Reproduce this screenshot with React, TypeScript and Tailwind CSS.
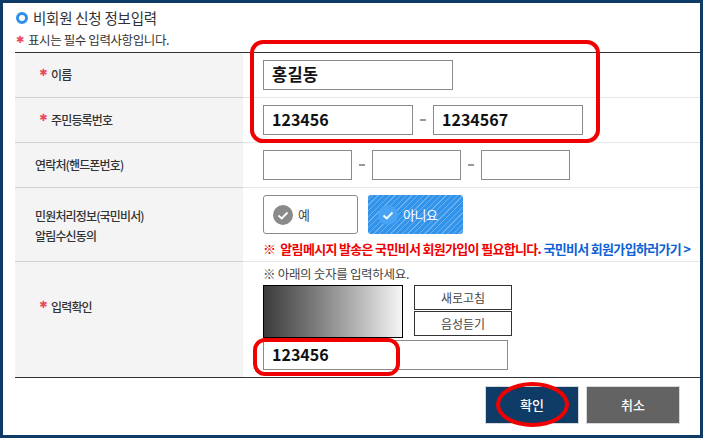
import React from "react";

const KR = "[font-family:'Noto_Sans_CJK_KR','Noto_Sans',sans-serif]";

function Star() {
  return <span className="mr-[4px] w-[8px] text-center [font-family:'DejaVu_Sans'] text-[10px] font-bold leading-none text-[#ea4a5f] relative top-[-2px]">✱</span>;
}

function Label({ star, children, pl = "pl-[20px]", extra = "", line = "border-b border-[#d2d2d2]" }: { star?: boolean; children: React.ReactNode; pl?: string; extra?: string; line?: string }) {
  return (
    <div className={`flex w-[228px] shrink-0 items-center bg-[#f4f4f4] ${pl} ${extra} ${line} text-[12px] font-medium tracking-[-0.85px] text-[#333]`}>
      {star && <Star />}
      <div>{children}</div>
    </div>
  );
}

function Field({ w, value, big }: { w: string; value?: string; big?: boolean }) {
  return (
    <div className={`flex h-[30px] ${w} shrink-0 items-center border border-[#8a8a8a] bg-white pb-[2px] pl-[8px] ${big ? "text-[16.5px] tracking-[0.2px]" : "text-[16px]"} font-bold text-[#111]`}>
      {value}
    </div>
  );
}

function Dash() {
  return <span className="flex w-[20px] shrink-0 justify-center"><span className="h-[2px] w-[6px] bg-[#999]" /></span>;
}

function Check({ bg }: { bg: string }) {
  return (
    <svg width="20" height="20" viewBox="0 0 20 20" className="shrink-0">
      <circle cx="10" cy="10" r="10" fill={bg} />
      <path d="M5.5 10.5l3.2 3 5.8-6" fill="none" stroke="#fff" strokeWidth="1.8" />
    </svg>
  );
}

export default function App() {
  const rowLine = "flex-1 border-b border-[#e6e6e6]";
  return (
    <div className={`relative h-[438px] w-[703px] overflow-hidden border-[3px] border-[#0f3c66] bg-white pl-[12px] ${KR}`}>
      <div className="flex h-[49px] flex-col">
        <div className="flex h-[27px] items-center gap-[5px] pt-[2px]">
          <span className="ml-[1px] h-[12px] w-[12px] rounded-full border-[3px] border-[#2f8fe8] bg-white" />
          <span className="text-[14.5px] tracking-[-0.25px] text-[#333]">비회원 신청 정보입력</span>
        </div>
        <div className="flex h-[20px] items-center text-[12.5px] tracking-[-0.4px] text-[#333]">
          <span className="ml-[1px] mr-[4px] w-[8px] text-center [font-family:'DejaVu_Sans'] text-[10px] font-bold leading-none text-[#ea4a5f]">✱</span>
          표시는 필수 입력사항입니다.
        </div>
      </div>

      <div className="border-y border-[#333]">
        <div className="flex h-[45px]">
          <Label star pl="pl-[24px]">이름</Label>
          <div className={`flex items-center pl-[20px] ${rowLine}`}><Field w="w-[190px]" value="홍길동" big /></div>
        </div>
        <div className="flex h-[45px]">
          <Label star pl="pl-[24px]">주민등록번호</Label>
          <div className={`flex items-center pl-[20px] ${rowLine}`}>
            <Field w="w-[150px]" value="123456" />
            <Dash />
            <Field w="w-[150px]" value="1234567" />
          </div>
        </div>
        <div className="flex h-[45px]">
          <Label>연락처(핸드폰번호)</Label>
          <div className={`flex items-center pl-[20px] ${rowLine}`}>
            <Field w="w-[89px]" />
            <Dash />
            <Field w="w-[89px]" />
            <Dash />
            <Field w="w-[89px]" />
          </div>
        </div>
        <div className="flex h-[74px]">
          <Label extra="pt-[3px]">
            <div className="leading-[20px]">민원처리정보(국민비서)</div>
            <div className="leading-[20px]">알림수신동의</div>
          </Label>
          <div className={`flex flex-col pl-[20px] pt-[7px] ${rowLine}`}>
            <div className="flex gap-[10px]">
              <div className="flex h-[39px] w-[95px] items-center gap-[5px] rounded-[3px] border border-[#8a8a8a] pl-[9px] text-[13px] text-[#444]">
                <Check bg="#8a8a8a" />예
              </div>
              <div className="flex h-[39px] w-[95px] items-center gap-[5px] rounded-[3px] bg-[#3293ea] bg-[repeating-linear-gradient(135deg,transparent_0,transparent_3px,rgba(255,255,255,0.28)_3px,rgba(255,255,255,0.28)_4px)] pl-[10px] text-[13px] tracking-[-0.5px] text-white">
                <Check bg="#49a3f5" />아니요
              </div>
            </div>
            <div className="mt-[6px] whitespace-nowrap text-[13px] font-bold leading-[18px] tracking-[-0.68px] text-[#f00000]">
              <span className="mr-[5px]">※</span>알림메시지 발송은 국민비서 회원가입이 필요합니다.{" "}
              <span className="text-[#0b62d6]">국민비서 회원가입하러가기 &gt;</span>
            </div>
          </div>
        </div>
        <div className="flex h-[115px]">
          <Label star pl="pl-[24px]" extra="pb-[26px]" line="">입력확인</Label>
          <div className="flex flex-col pl-[20px]">
            <div className="h-[23px] pt-[3px] text-[12.5px] leading-[18px] tracking-[-0.3px] text-[#444]">※ 아래의 숫자를 입력하세요.</div>
            <div className="flex">
              <div className="h-[53px] w-[140px] border border-black bg-gradient-to-r from-[#3c3c3c] to-[#f6f6f6]" />
              <div className="ml-[11px] flex w-[98px] flex-col gap-[1px]">
                <div className="flex h-[25px] items-center justify-center border border-[#333] text-[12px] text-[#444]">새로고침</div>
                <div className="flex h-[25px] items-center justify-center border border-[#333] text-[12px] text-[#444]">음성듣기</div>
              </div>
            </div>
            <div className="mt-[2px]"><Field w="w-[245px]" value="123456" /></div>
          </div>
        </div>
      </div>

      <div className="flex justify-end gap-[7px] pr-[20px] pt-[8px]">
        <div className="flex h-[38px] w-[94px] items-center justify-center border border-[#d8d8d8] bg-[#0f3c66] text-[13px] font-medium text-white">확인</div>
        <div className="flex h-[38px] w-[94px] items-center justify-center border border-[#d8d8d8] bg-[#636363] text-[13px] font-medium text-white">취소</div>
      </div>

      <div className="absolute left-[247px] top-[37px] h-[103px] w-[350px] rounded-[13px] border-[4px] border-[#f00000]" />
      <div className="absolute left-[250px] top-[335px] h-[38px] w-[147px] rounded-[12px] border-[4px] border-[#f00000]" />
      <div className="absolute left-[493px] top-[379px] h-[45px] w-[73px] rounded-[50%] border-[4px] border-[#f00000]" />
    </div>
  );
}
